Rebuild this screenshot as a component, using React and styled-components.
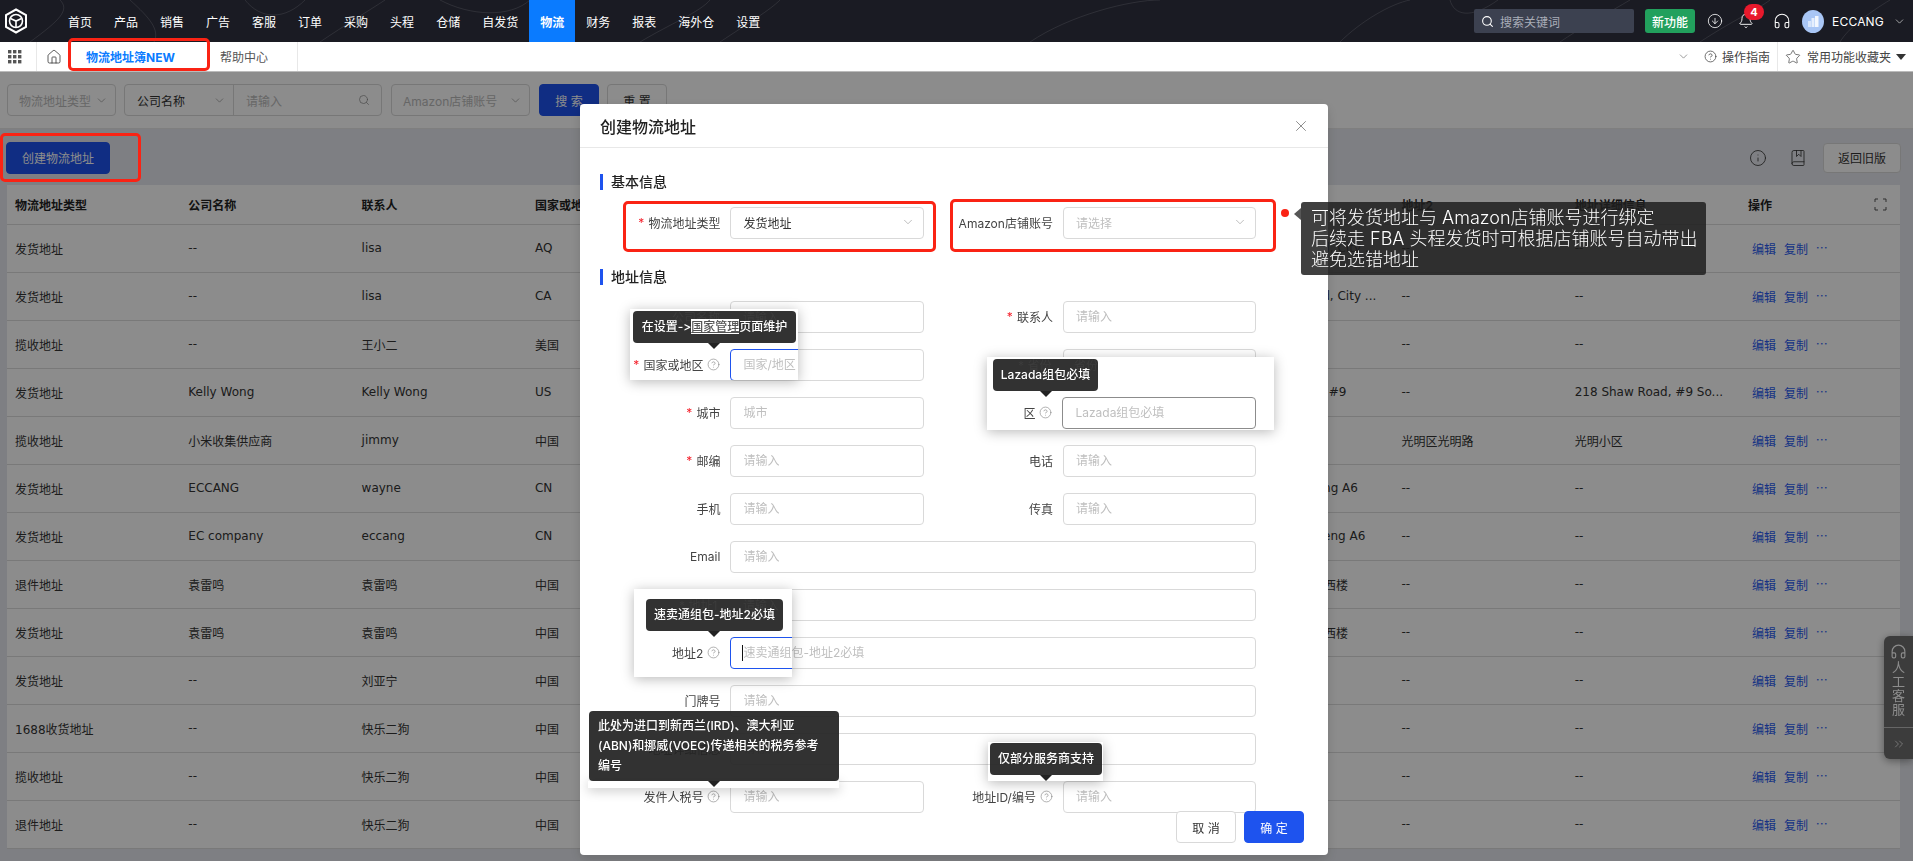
import styled, { createGlobalStyle } from 'styled-components';
import {
  Bell,
  BookMarked,
  ChevronDown,
  ChevronsRight,
  CircleArrowDown,
  CircleHelp,
  Headphones,
  House,
  Info,
  Search,
  Star,
  X,
} from 'lucide-react';

const GlobalStyle = createGlobalStyle`
  html, body {
    margin: 0;
    height: 100%;
    overflow: hidden;
    background: #e6e8ee;
    font-family: Inter, "Noto Sans CJK SC", sans-serif;
    font-size: 12px;
    color: #333;
  }
  * { box-sizing: border-box; }
`;

const NAV = ['首页', '产品', '销售', '广告', '客服', '订单', '采购', '头程', '仓储', '自发货', '物流', '财务', '报表', '海外仓', '设置'];

const ROWS = [
  ['发货地址', '--', 'lisa', 'AQ', '-888 Grand Road, City ...'],
  ['发货地址', '--', 'lisa', 'CA', '-888 Grand Road, City ...'],
  ['揽收地址', '--', '王小二', '美国', ''],
  ['发货地址', 'Kelly Wong', 'Kelly Wong', 'US', '218 Shaw Road, #9', '--', '218 Shaw Road, #9 So...'],
  ['揽收地址', '小米收集供应商', 'jimmy', '中国', '', '光明区光明路', '光明小区'],
  ['发货地址', 'ECCANG', 'wayne', 'CN', 'Building 12 Cheng A6'],
  ['发货地址', 'EC company', 'eccang', 'CN', 'Building 123 Zheng A6'],
  ['退件地址', '袁雷鸣', '袁雷鸣', '中国', '中国广东省深圳市西楼'],
  ['发货地址', '袁雷鸣', '袁雷鸣', '中国', '中国广东省深圳市西楼'],
  ['发货地址', '--', '刘亚宁', '中国', ''],
  ['1688收货地址', '--', '快乐二狗', '中国', ''],
  ['揽收地址', '--', '快乐二狗', '中国', ''],
  ['退件地址', '--', '快乐二狗', '中国', ''],
];

const HEADERS = ['物流地址类型', '公司名称', '联系人', '国家或地区', '省份', '城市', '区', '地址1', '地址2', '地址详细信息'];

const FIELDS = [
  { label: '公司名称', hint: '请输入' },
  { label: '联系人', hint: '请输入', required: true },
  { label: '国家或地区', hint: '国家/地区', required: true, help: true },
  { label: '省份', hint: '省份', required: true },
  { label: '城市', hint: '城市', required: true },
  { label: '区', hint: 'Lazada组包必填', help: true },
  { label: '邮编', hint: '请输入', required: true },
  { label: '电话', hint: '请输入' },
  { label: '手机', hint: '请输入' },
  { label: '传真', hint: '请输入' },
  { label: 'Email', hint: '请输入', wide: true },
  { label: '地址1', hint: '请输入', required: true, wide: true },
  { label: '地址2', hint: '速卖通组包-地址2必填', help: true, wide: true },
  { label: '门牌号', hint: '请输入', wide: true },
  { label: '地址详细信息', hint: '请输入', wide: true },
  { label: '发件人税号', hint: '请输入', help: true },
  { label: '地址ID/编号', hint: '请输入', help: true },
];

// top bar
const TopBar = styled.header`
  position: relative;
  z-index: 12;
  height: 42px;
  display: flex;
  align-items: center;
  background: #1a1b23;
  color: #fff;
  overflow: hidden;
`;

const Contours = styled.svg`
  position: absolute;
  inset: 0;
  width: 100%;
  height: 100%;
  pointer-events: none;
`;

const LogoSlot = styled.div`
  width: 57px;
  padding-left: 4px;
  display: flex;
  position: relative;
`;

const Nav = styled.nav`
  display: flex;
  height: 100%;
  position: relative;
`;

const NavItem = styled.a`
  padding: 0 11px;
  display: flex;
  align-items: center;
  font-size: 12px;
  color: #fff;
  font-weight: ${(p) => (p.$active ? 700 : 400)};
  background: ${(p) => (p.$active ? '#0a7bff' : 'transparent')};
`;

const TopRight = styled.div`
  margin-left: auto;
  padding-right: 7px;
  display: flex;
  align-items: center;
  position: relative;
`;

const SearchBox = styled.div`
  width: 160px;
  height: 24px;
  padding-left: 7px;
  display: flex;
  align-items: center;
  gap: 6px;
  border-radius: 2px;
  background: #3c4150;
  color: #a9adb8;
`;

const NewButton = styled.div`
  width: 50px;
  height: 24px;
  margin-left: 11px;
  display: flex;
  align-items: center;
  justify-content: center;
  border-radius: 3px;
  background: #22a05d;
  font-weight: 500;
`;

const TopIcon = styled.div`
  margin-left: ${(p) => p.$gap}px;
  display: flex;
  position: relative;
`;

const Badge = styled.span`
  position: absolute;
  left: 6px;
  top: -9px;
  width: 20px;
  height: 16px;
  border-radius: 9px;
  background: #e8192c;
  color: #fff;
  font-size: 11px;
  font-weight: 700;
  line-height: 16px;
  text-align: center;
`;

const Avatar = styled.svg`
  width: 22px;
  height: 23px;
  margin-left: 11px;
  display: block;
`;

const UserName = styled.span`
  margin: 0 9px 0 8px;
  font-size: 12px;
  letter-spacing: 0.2px;
`;

// tab bar
const TabBar = styled.div`
  position: relative;
  z-index: 12;
  height: 30px;
  display: flex;
  background: #fff;
  border-bottom: 1px solid #bbb;
`;

const GridCell = styled.div`
  width: 37px;
  padding-left: 8px;
  display: flex;
  align-items: center;
  border-right: 1px solid #e8e8e8;
`;

const HomeCell = styled.div`
  width: 31px;
  padding-left: 9px;
  display: flex;
  align-items: center;
  color: #333;
`;

const Tab = styled.div`
  width: ${(p) => p.$width}px;
  padding-left: ${(p) => p.$pad}px;
  display: flex;
  align-items: center;
  font-weight: ${(p) => (p.$active ? 700 : 400)};
  color: ${(p) => (p.$active ? '#0a7bff' : '#555')};
  border-right: ${(p) => (p.$active ? 'none' : '1px solid #e8e8e8')};
`;

const TabRight = styled.div`
  margin-left: auto;
  padding-right: 7px;
  display: flex;
  align-items: center;
  color: #444;
`;

const TabDivider = styled.span`
  width: 1px;
  height: 100%;
  margin: 0 7px;
  background: #e8e8e8;
`;

const Caret = styled.span`
  width: 0;
  height: 0;
  margin-left: 5px;
  border-left: 5px solid transparent;
  border-right: 5px solid transparent;
  border-top: 6px solid #333;
`;

const Spaced = styled.span`
  margin-left: ${(p) => p.$left || 0}px;
  display: inline-flex;
`;

// dimmed page
const FilterBar = styled.div`
  height: 57px;
  padding-left: 7px;
  display: flex;
  align-items: center;
  background: #fff;
  border-bottom: 1px solid #e8e8e8;
`;

const FilterSelect = styled.div`
  width: ${(p) => p.$width}px;
  height: 32px;
  margin-right: ${(p) => p.$gap}px;
  padding: 0 7px 0 11px;
  display: flex;
  align-items: center;
  justify-content: space-between;
  border: 1px solid #d9d9d9;
  border-radius: 4px;
  color: #bbb;
`;

const FilterGroup = styled.div`
  width: 258px;
  height: 32px;
  margin-right: 9px;
  display: flex;
  border: 1px solid #d9d9d9;
  border-radius: 4px;
`;

const GroupPick = styled.div`
  width: 109px;
  padding: 0 7px 0 12px;
  display: flex;
  align-items: center;
  justify-content: space-between;
  border-right: 1px solid #d9d9d9;
  color: #333;
`;

const GroupInput = styled.div`
  flex: 1;
  padding: 0 11px 0 12px;
  display: flex;
  align-items: center;
  justify-content: space-between;
  color: #bbb;
`;

const Button = styled.button`
  width: ${(p) => p.$width || 60}px;
  height: ${(p) => p.$height || 32}px;
  margin-right: ${(p) => p.$gap || 0}px;
  padding: 0;
  border-radius: 4px;
  border: 1px solid ${(p) => (p.$primary ? '#1e53ee' : '#d9d9d9')};
  background: ${(p) => (p.$primary ? '#1e53ee' : '#fff')};
  color: ${(p) => (p.$primary ? '#fff' : '#333')};
  font: inherit;
  font-size: 12px;
`;

const ToolBar = styled.div`
  height: 56px;
  padding: 1px 12px 0 6px;
  display: flex;
  align-items: center;
`;

const ToolRight = styled.div`
  margin-left: auto;
  display: flex;
  align-items: center;
  gap: 16px;
`;

const ToolIcons = styled.div`
  display: flex;
  align-items: center;
  gap: 22px;
  color: #333;
`;

const TableWrap = styled.div`
  margin: 0 13px 0 7px;
  background: #fff;
`;

const Table = styled.table`
  width: 1893px;
  table-layout: fixed;
  border-collapse: collapse;
  font-family: "DejaVu Sans", "Noto Sans CJK SC", sans-serif;
  font-size: 12px;
  color: #333;
`;

const Th = styled.th`
  width: ${(p) => p.$width || 173.3}px;
  height: 39px;
  padding: 0 8px;
  text-align: left;
  font-weight: 700;
  color: #222;
  font-family: Inter, "Noto Sans CJK SC", sans-serif;
  border-bottom: 1px solid #ddd;
  position: relative;
`;

const Td = styled.td`
  height: 48px;
  padding: 0 8px;
  white-space: nowrap;
  overflow: hidden;
  border-bottom: 1px solid #ddd;
`;

const OpsCell = styled(Td)`
  padding-left: 12px;
  font-family: Inter, "Noto Sans CJK SC", sans-serif;
  color: #2a5cf0;
`;

const OpLink = styled.a`
  margin-right: 8px;
  color: #2a5cf0;
`;

const MoreDots = styled(OpLink)`
  position: relative;
  top: -2px;
  letter-spacing: 0.6px;
`;

const ExpandIcon = styled.svg`
  position: absolute;
  right: 13px;
  top: 13px;
  width: 13px;
  height: 13px;
`;

const SideTool = styled.aside`
  position: fixed;
  right: 0;
  top: 636px;
  width: 29px;
  height: 123px;
  display: flex;
  flex-direction: column;
  align-items: center;
  border-radius: 6px 0 0 6px;
  background: #6e6e6e;
  color: #fff;
  box-shadow: 0 2px 8px rgba(0, 0, 0, 0.4);
`;

const SideText = styled.div`
  width: 100%;
  height: 92px;
  padding-top: 7px;
  display: flex;
  flex-direction: column;
  align-items: center;
  font-size: 13px;
  line-height: 14px;
  border-bottom: 1px solid #bbb;
`;

const SideMore = styled.div`
  flex: 1;
  display: flex;
  align-items: center;
`;

const Mask = styled.div`
  position: fixed;
  inset: 0;
  z-index: 10;
  background: rgba(0, 0, 0, 0.45);
`;

// modal
const Modal = styled.section`
  position: fixed;
  z-index: 11;
  left: 580px;
  top: 104px;
  width: 748px;
  height: 751px;
  overflow: hidden;
  border-radius: 4px;
  background: #fff;
  box-shadow: 0 4px 12px rgba(0, 0, 0, 0.15);
`;

const ModalHead = styled.div`
  height: 44px;
  padding: 0 18px 0 20px;
  display: flex;
  align-items: center;
  justify-content: space-between;
  font-size: 16px;
  font-weight: 500;
  color: #222;
  border-bottom: 1px solid #e8e8e8;
`;

const ModalBody = styled.div`
  padding: 26px 20px 0;
`;

const SectionTitle = styled.h3`
  margin: ${(p) => p.$top || 0}px 0 ${(p) => p.$bottom}px;
  height: 16px;
  padding-left: 8px;
  border-left: 3px solid #1e53ee;
  font-size: 14px;
  font-weight: 500;
  line-height: 16px;
  color: #222;
`;

const FormGrid = styled.div`
  width: 656px;
  display: grid;
  grid-template-columns: 323.5px 323.5px;
  column-gap: 9px;
  row-gap: 16px;
`;

const Field = styled.div`
  grid-column: ${(p) => (p.$wide ? '1 / 3' : 'auto')};
  display: grid;
  grid-template-columns: 120.4px 1fr;
  column-gap: 10px;
  align-items: center;
`;

const PatchField = styled(Field)`
  position: absolute;
  left: ${(p) => p.$left}px;
  top: ${(p) => p.$top}px;
  width: ${(p) => p.$width}px;
`;

const LabelText = styled.label`
  padding-bottom: 2px;
  display: flex;
  justify-content: flex-end;
  align-items: center;
  color: #444;
  font-size: 12px;
  white-space: nowrap;
`;

const Required = styled.span`
  margin-right: 4px;
  color: #f5222d;
`;

const HelpIcon = styled(CircleHelp)`
  margin-left: 4px;
  color: #888;
`;

const Input = styled.input`
  width: 100%;
  height: 32px;
  padding: 0 12px 2px;
  border: 1px solid ${(p) => p.$border || '#d9d9d9'};
  border-radius: 4px;
  background: #fff;
  font: inherit;
  font-size: 12px;
  outline: none;
  &::placeholder { color: #bfbfbf; opacity: 1; }
`;

const SelectBox = styled.div`
  height: 32px;
  padding: 0 8px 2px 12px;
  display: flex;
  align-items: center;
  justify-content: space-between;
  border: 1px solid #d9d9d9;
  border-radius: 4px;
  color: ${(p) => (p.$empty ? '#bfbfbf' : '#333')};
`;

const ModalFoot = styled.div`
  position: absolute;
  right: 24px;
  bottom: 12px;
  display: flex;
  gap: 8px;
`;

const CaretLine = styled.span`
  position: absolute;
  left: 12px;
  top: 8px;
  width: 1px;
  height: 16px;
  background: #111;
`;

const InputSlot = styled.div`
  position: relative;
`;

// the pasted highlights that sit over the form
const Patch = styled.div`
  position: absolute;
  left: ${(p) => p.$left}px;
  top: ${(p) => p.$top}px;
  width: ${(p) => p.$width}px;
  height: ${(p) => p.$height}px;
  overflow: hidden;
  background: ${(p) => (p.$clear ? 'transparent' : '#fff')};
  box-shadow: 0 2px 12px rgba(0, 0, 0, 0.28);
`;

const Tip = styled.div`
  position: absolute;
  left: ${(p) => p.$left}px;
  top: ${(p) => p.$top}px;
  width: ${(p) => p.$width}px;
  height: ${(p) => p.$height || 32}px;
  padding: ${(p) => (p.$block ? '5px 9px' : '0')};
  display: ${(p) => (p.$block ? 'block' : 'flex')};
  align-items: center;
  justify-content: center;
  border-radius: 4px;
  background: rgba(34, 34, 34, 0.93);
  color: #fff;
  font-weight: 500;
  font-size: 12px;
  line-height: 20px;
  white-space: nowrap;
  font-variant-ligatures: none;
  font-feature-settings: "calt" 0;
  z-index: 2;
  &::after {
    content: '';
    position: absolute;
    left: ${(p) => p.$arrow}px;
    bottom: -6px;
    margin-left: -6px;
    border-left: 6px solid transparent;
    border-right: 6px solid transparent;
    border-top: 6px solid #222;
  }
`;

const TipGhost = styled.span`
  position: absolute;
  left: ${(p) => p.$left}px;
  top: ${(p) => p.$top}px;
  color: #3c3c3c;
  font-weight: 400;
`;

const TipText = styled.span`
  position: relative;
`;

const Selected = styled.span`
  background: #fff;
  color: #555;
  text-decoration: underline;
`;

const RedFrame = styled.div`
  position: ${(p) => (p.$fixed ? 'fixed' : 'absolute')};
  z-index: 13;
  left: ${(p) => p.$left}px;
  top: ${(p) => p.$top}px;
  width: ${(p) => p.$width}px;
  height: ${(p) => p.$height}px;
  border: 3px solid #fa2314;
  border-radius: 5px;
  pointer-events: none;
`;

const RedDot = styled.span`
  position: fixed;
  z-index: 14;
  left: 1281px;
  top: 209px;
  width: 8px;
  height: 8px;
  border-radius: 50%;
  background: #fa2314;
`;

const BigNote = styled.div`
  position: fixed;
  z-index: 14;
  left: 1301px;
  top: 202px;
  width: 405px;
  height: 73px;
  padding: 5px 0 0 10px;
  border-radius: 3px;
  background: rgba(30, 30, 30, 0.85);
  color: #fff;
  font-size: 18px;
  font-weight: 300;
  line-height: 21px;
  white-space: nowrap;
  &::before {
    content: '';
    position: absolute;
    left: -7px;
    top: 6px;
    border-top: 6px solid transparent;
    border-bottom: 6px solid transparent;
    border-right: 7px solid rgba(30, 30, 30, 0.75);
  }
`;

function Logo() {
  return (
    <svg width="24" height="26" viewBox="0 0 24 26" fill="none">
      <path d="M12 1.5 22 7v12l-10 5.5L2 19V7z" stroke="#fff" strokeWidth="2" />
      <circle cx="12" cy="13" r="6.5" stroke="#fff" strokeWidth="1.6" />
      <path d="M6.5 10.5 12 13l5.5-2.5M12 13v6" stroke="#fff" strokeWidth="1.6" />
    </svg>
  );
}

function GridIcon() {
  return (
    <svg width="14" height="14" viewBox="0 0 14 14" fill="#555">
      {[0, 5, 10].map((y) =>
        [0, 5, 10].map((x) => <rect key={`${x}-${y}`} x={x} y={y} width="3.4" height="3.4" />),
      )}
    </svg>
  );
}

function FieldLabel({ label, required, help }) {
  return (
    <LabelText>
      {required && <Required>*</Required>}
      {label}
      {help && <HelpIcon size={13} strokeWidth={1.2} />}
    </LabelText>
  );
}

export default function App() {
  return (
    <>
      <GlobalStyle />
      <TopBar>
        <Contours viewBox="0 0 1913 42" fill="none" stroke="rgba(255,255,255,0.09)">
          <path d="M30 42C60 20 70 10 60 0M130 0c20 18 30 30 24 42M320 42C345 25 370 10 385 0M440 0c30 16 70 18 90 0" />
          <path d="M245 0c16 20 40 20 60 0M640 42c30-18 60-30 70-42M720 42c30-20 50-32 60-42M1030 42C1070 15 1130 0 1160 0" />
          <path d="M1340 42c20-20 50-38 70-42M1450 0c4 15 20 20 48 0M1560 42c20-14 50-30 70-42M1700 42c30-20 60-34 70-42M1840 42c8-14 30-30 50-42" />
        </Contours>
        <LogoSlot>
          <Logo />
        </LogoSlot>
        <Nav>
          {NAV.map((name) => (
            <NavItem key={name} $active={name === '物流'}>
              {name}
            </NavItem>
          ))}
        </Nav>
        <TopRight>
          <SearchBox>
            <Search size={13} color="#fff" />
            搜索关键词
          </SearchBox>
          <NewButton>新功能</NewButton>
          <TopIcon $gap={12}>
            <CircleArrowDown size={16} strokeWidth={1.2} />
          </TopIcon>
          <TopIcon $gap={15}>
            <Bell size={16} strokeWidth={1.4} />
            <Badge>4</Badge>
          </TopIcon>
          <TopIcon $gap={19}>
            <Headphones size={18} strokeWidth={1.4} />
          </TopIcon>
          <Avatar viewBox="0 0 22 23">
            <ellipse cx="11" cy="11.5" rx="11" ry="11.5" fill="#a9c6f5" />
            <rect x="6" y="11" width="3" height="6" fill="#d7e5fb" />
            <rect x="9.5" y="8" width="3" height="9" fill="#e6effd" />
            <rect x="13" y="6" width="3.5" height="11" fill="#f3f7fe" />
          </Avatar>
          <UserName>ECCANG</UserName>
          <ChevronDown size={13} strokeWidth={1.4} color="#ccc" />
        </TopRight>
      </TopBar>

      <TabBar>
        <GridCell>
          <GridIcon />
        </GridCell>
        <HomeCell>
          <House size={16} strokeWidth={1.2} />
        </HomeCell>
        <Tab $active $width={142} $pad={18}>
          物流地址簿NEW
        </Tab>
        <Tab $width={88} $pad={10}>
          帮助中心
        </Tab>
        <TabRight>
          <ChevronDown size={13} strokeWidth={1.2} color="#666" />
          <Spaced $left={14}>
            <CircleHelp size={13} strokeWidth={1.4} />
          </Spaced>
          <Spaced $left={5}>操作指南</Spaced>
          <TabDivider />
          <Star size={16} strokeWidth={1.2} color="#555" />
          <Spaced $left={6}>常用功能收藏夹</Spaced>
          <Caret />
        </TabRight>
      </TabBar>

      <main>
        <FilterBar>
          <FilterSelect $width={109} $gap={8}>
            物流地址类型
            <ChevronDown size={13} strokeWidth={1.2} color="#888" />
          </FilterSelect>
          <FilterGroup>
            <GroupPick>
              公司名称
              <ChevronDown size={13} strokeWidth={1.2} color="#888" />
            </GroupPick>
            <GroupInput>
              请输入
              <Search size={12} strokeWidth={1.4} color="#888" />
            </GroupInput>
          </FilterGroup>
          <FilterSelect $width={139} $gap={9}>
            Amazon店铺账号
            <ChevronDown size={13} strokeWidth={1.2} color="#888" />
          </FilterSelect>
          <Button $primary $gap={8}>
            搜 索
          </Button>
          <Button>重 置</Button>
        </FilterBar>

        <ToolBar>
          <Button $primary $width={104}>
            创建物流地址
          </Button>
          <ToolRight>
            <ToolIcons>
              <Info size={18} strokeWidth={1.1} />
              <BookMarked size={18} strokeWidth={1.1} />
            </ToolIcons>
            <Button $width={78} $height={30}>
              返回旧版
            </Button>
          </ToolRight>
        </ToolBar>

        <TableWrap>
          <Table>
            <thead>
              <tr>
                {HEADERS.map((h) => (
                  <Th key={h}>{h}</Th>
                ))}
                <Th $width={160}>
                  操作
                  <ExpandIcon viewBox="0 0 13 13" fill="none" stroke="#555">
                    <path d="M1 4V1h3M9 1h3v3M1 9v3h3M12 9v3H9" />
                  </ExpandIcon>
                </Th>
              </tr>
            </thead>
            <tbody>
              {ROWS.map((row, i) => (
                <tr key={i}>
                  <Td>{row[0]}</Td>
                  <Td>{row[1]}</Td>
                  <Td>{row[2]}</Td>
                  <Td>{row[3]}</Td>
                  <Td>--</Td>
                  <Td>--</Td>
                  <Td>--</Td>
                  <Td>{row[4]}</Td>
                  <Td>{row[5] || '--'}</Td>
                  <Td>{row[6] || '--'}</Td>
                  <OpsCell>
                    <OpLink>编辑</OpLink>
                    <OpLink>复制</OpLink>
                    <MoreDots>···</MoreDots>
                  </OpsCell>
                </tr>
              ))}
            </tbody>
          </Table>
        </TableWrap>

        <SideTool>
          <SideText>
            <Headphones size={17} strokeWidth={1.6} />
            <span>人</span>
            <span>工</span>
            <span>客</span>
            <span>服</span>
          </SideText>
          <SideMore>
            <ChevronsRight size={14} strokeWidth={1.2} />
          </SideMore>
        </SideTool>
      </main>

      <Mask />

      <Modal>
        <ModalHead>
          创建物流地址
          <X size={18} strokeWidth={1.1} color="#777" />
        </ModalHead>
        <ModalBody>
          <SectionTitle $bottom={17}>基本信息</SectionTitle>
          <FormGrid>
            <Field>
              <FieldLabel label="物流地址类型" required />
              <SelectBox>
                发货地址
                <ChevronDown size={14} strokeWidth={1.1} color="#999" />
              </SelectBox>
            </Field>
            <Field>
              <FieldLabel label="Amazon店铺账号" />
              <SelectBox $empty>
                请选择
                <ChevronDown size={14} strokeWidth={1.1} color="#999" />
              </SelectBox>
            </Field>
          </FormGrid>
          <SectionTitle $top={30} $bottom={16}>
            地址信息
          </SectionTitle>
          <FormGrid>
            {FIELDS.map((f) => (
              <Field key={f.label} $wide={f.wide}>
                <FieldLabel label={f.label} required={f.required} help={f.help} />
                <Input placeholder={f.hint} readOnly />
              </Field>
            ))}
          </FormGrid>
        </ModalBody>

        <RedFrame $left={43} $top={97} $width={313} $height={51} />
        <RedFrame $left={370} $top={95} $width={326} $height={53} />

        <Patch $left={50} $top={205} $width={168} $height={71}>
          <PatchField $left={-30} $top={40} $width={323.5}>
            <FieldLabel label="国家或地区" required help />
            <Input placeholder="国家/地区" $border="#1e53ee" readOnly />
          </PatchField>
          <Tip $left={3} $top={2} $width={163} $arrow={81}>
            <TipGhost $left={39} $top={-3}>公司名称</TipGhost>
            <TipGhost $left={110} $top={-3}>请输入</TipGhost>
            <TipText>
              在设置-&gt;<Selected>国家管理</Selected>页面维护
            </TipText>
          </Tip>
        </Patch>

        <Patch $left={407} $top={253} $width={287} $height={73}>
          <PatchField $left={-55} $top={40} $width={323.5}>
            <FieldLabel label="区" help />
            <Input placeholder="Lazada组包必填" $border="#8c8c8c" readOnly />
          </PatchField>
          <Tip $left={6} $top={2} $width={105} $arrow={53}>
            <TipGhost $left={25} $top={-3}>* 省份</TipGhost>
            <TipGhost $left={81} $top={-3}>省份</TipGhost>
            <TipText>Lazada组包必填</TipText>
          </Tip>
        </Patch>

        <Patch $left={54} $top={485} $width={158} $height={88}>
          <PatchField $left={-34} $top={48} $width={656}>
            <FieldLabel label="地址2" help />
            <InputSlot>
              <Input placeholder="速卖通组包-地址2必填" $border="#1e53ee" readOnly />
              <CaretLine />
            </InputSlot>
          </PatchField>
          <Tip $left={12} $top={10} $width={137} $arrow={68}>
            <TipGhost $left={33} $top={-3}>* 地址1</TipGhost>
            <TipGhost $left={97} $top={-3}>请输入</TipGhost>
            <TipText>速卖通组包-地址2必填</TipText>
          </Tip>
        </Patch>

        <Patch $left={8} $top={677} $width={251} $height={7} />
        <Tip $left={9} $top={607} $width={250} $height={70} $block $arrow={125}>
          此处为进口到新西兰(IRD)、澳大利亚
          <br />
          (ABN)和挪威(VOEC)传递相关的税务参考
          <br />
          编号
        </Tip>

        <Patch $left={408} $top={638} $width={115} $height={39} $clear>
          <Tip $left={2} $top={1} $width={112} $arrow={56}>
            <TipText>仅部分服务商支持</TipText>
          </Tip>
        </Patch>

        <ModalFoot>
          <Button>取 消</Button>
          <Button $primary>确 定</Button>
        </ModalFoot>
      </Modal>

      <RedFrame $fixed $left={68} $top={38} $width={142} $height={33} />
      <RedFrame $fixed $left={0} $top={133} $width={141} $height={49} />
      <RedDot />
      <BigNote>
        可将发货地址与 Amazon店铺账号进行绑定
        <br />
        后续走 FBA 头程发货时可根据店铺账号自动带出
        <br />
        避免选错地址
      </BigNote>
    </>
  );
}
